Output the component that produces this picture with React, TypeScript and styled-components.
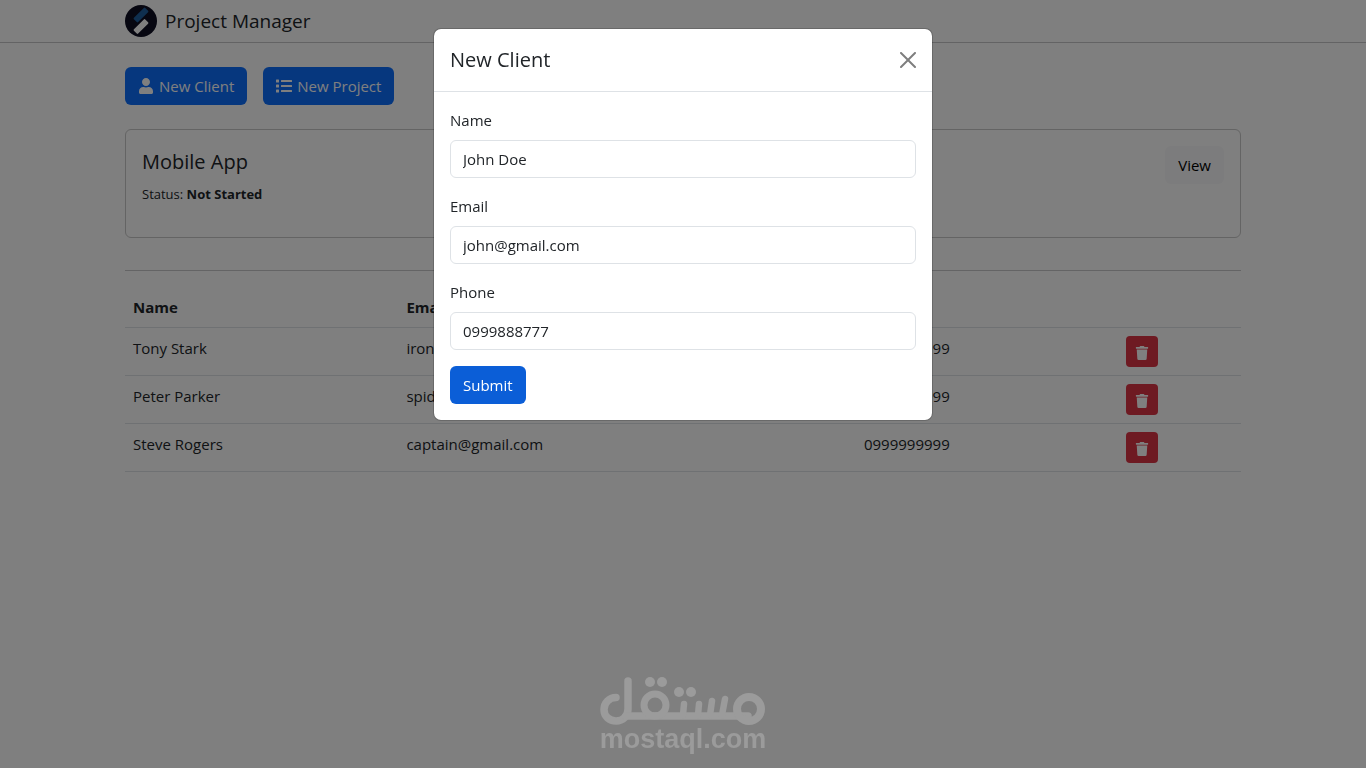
import React from "react";
import styled, { createGlobalStyle } from "styled-components";
import { FaUser, FaList, FaTrash } from "react-icons/fa";

const GlobalStyle = createGlobalStyle`
  *, *::before, *::after { box-sizing: border-box; }
  body {
    margin: 0;
    background: #fff;
    color: #212529;
    font-family: "Segoe UI", "Open Sans", "Noto Sans", sans-serif;
    font-size: 15px;
    line-height: 24px;
  }
  button, input { font: inherit; }
`;

const Container = styled.div`
  width: 100%;
  max-width: 1140px;
  margin: 0 auto;
  padding: 0 12px;
`;

const Navbar = styled.nav`
  padding: 5px 0;
  border-bottom: 1px solid #c6c7c8;
`;

const Brand = styled.a`
  display: flex;
  align-items: center;
  gap: 8px;
  width: fit-content;
  height: 32px;
  color: #212529;
  font-size: 19px;
  text-decoration: none;
`;

const Actions = styled.div`
  display: flex;
  gap: 16px;
  margin: 24px 0;
`;

const Button = styled.button<{ $tone: "primary" | "active" | "light" }>`
  display: inline-flex;
  align-items: center;
  gap: 5px;
  padding: 6px 12px;
  border: 1px solid transparent;
  border-radius: 6px;
  color: ${(p) => (p.$tone === "light" ? "#000" : "#fff")};
  background: ${(p) => ({ primary: "#0d6efd", active: "#0b5ed7", light: "#f8f9fa" })[p.$tone]};
`;

const Card = styled.article`
  display: flex;
  justify-content: space-between;
  align-items: flex-start;
  padding: 16px;
  min-height: 109px;
  border: 1px solid #c8c8c8;
  border-radius: 6px;
`;

const CardTitle = styled.h5`
  margin: 4px 0 8px;
  font-size: 20px;
  line-height: 24px;
  font-weight: 500;
`;

const Status = styled.p`
  margin: 0;
  font-size: 13px;
  line-height: 24px;
`;

const Divider = styled.hr`
  margin: 32px 0 16px;
  border: 0;
  border-top: 1px solid #c8c9ca;
`;

const Table = styled.table`
  width: 100%;
  table-layout: fixed;
  border-collapse: collapse;
  text-align: left;
`;

const Column = styled.col<{ $width: string }>`
  width: ${(p) => p.$width};
`;

const Cell = styled.td`
  padding: 8px;
  border-bottom: 1px solid #dee2e6;
  vertical-align: top;
`;

const DeleteButton = styled.button`
  display: block;
  padding: 10px 8px 7px;
  height: 31px;
  width: 32px;
  border: 0;
  border-radius: 4px;
  color: #fff;
  background: #dc3545;
  svg { display: block; margin: 0 auto; }
`;

const Backdrop = styled.div`
  position: fixed;
  inset: 0;
  background: rgba(0, 0, 0, 0.5);
`;

const ModalLayer = styled.div`
  position: fixed;
  inset: 0;
  padding: 28px 8px;
  overflow: auto;
`;

const Modal = styled.div`
  max-width: 500px;
  margin: 0 auto;
  border: 1px solid rgba(0, 0, 0, 0.175);
  border-radius: 8px;
  background: #fff;
  background-clip: padding-box;
`;

const ModalHeader = styled.header`
  display: flex;
  align-items: center;
  justify-content: space-between;
  padding: 16px;
  border-bottom: 1px solid #dee2e6;
`;

const ModalTitle = styled.h5`
  margin: 0;
  font-size: 20px;
  line-height: 30px;
  font-weight: 500;
`;

const CloseButton = styled.button`
  padding: 0;
  border: 0;
  background: none;
  opacity: 0.5;
  svg { display: block; }
`;

const Form = styled.form`
  padding: 16px;
`;

const Field = styled.div`
  margin-bottom: 16px;
`;

const Label = styled.label`
  display: block;
  margin-bottom: 8px;
`;

const Input = styled.input`
  display: block;
  width: 100%;
  padding: 6px 12px;
  height: 38px;
  border: 1px solid #dee2e6;
  border-radius: 6px;
  color: #212529;
  background: #fff;
`;

const Watermark = styled.div`
  position: fixed;
  left: 0;
  right: 0;
  bottom: 15px;
  display: flex;
  flex-direction: column;
  align-items: center;
  color: #9b9b9b;
  font-family: "Liberation Sans", sans-serif;
  font-size: 27px;
  font-weight: 700;
  line-height: 28px;
  pointer-events: none;
  svg { display: block; }
`;

const BrandLogo = () => (
  <svg width="32" height="32" viewBox="0 0 32 32" aria-hidden="true">
    <circle cx="16" cy="16" r="16" fill="#0f0f23" />
    <rect x="-8" y="-3" width="16" height="6" rx="1" fill="#1f5f9e" transform="translate(16 10) rotate(-45)" />
    <rect x="-8" y="-3" width="16" height="6" rx="1" fill="#fff" transform="translate(16 21.5) rotate(-45)" />
  </svg>
);

const WatermarkLogo = () => (
  <svg width="166" height="48" viewBox="0 0 166 48" fill="none" stroke="currentColor" strokeLinecap="round" aria-hidden="true">
    <path d="M16 20.500C9 20.500 4 26 4 32.500C4 39.500 9.500 44 16 44C23 44 28 39 28 32V4" strokeWidth="7.500" />
    <path d="M26 39H148" strokeWidth="7.500" />
    <circle cx="55" cy="28" r="11" strokeWidth="7" />
    <circle cx="149" cy="32" r="12" strokeWidth="8" />
    <path d="M84 27L83 38M99 27L98 38M112 24L110 38M125 22L122 38" strokeWidth="6.500" />
    <g fill="currentColor" stroke="none">
      <circle cx="50" cy="5" r="5" />
      <circle cx="62" cy="5" r="5" />
      <circle cx="79" cy="15" r="5" />
      <circle cx="91" cy="15" r="5" />
    </g>
  </svg>
);

const clients = [
  { name: "Tony Stark", email: "ironman@gmail.com", phone: "0999999999" },
  { name: "Peter Parker", email: "spider@gmail.com", phone: "0999999999" },
  { name: "Steve Rogers", email: "captain@gmail.com", phone: "0999999999" },
];

const fields = [
  { id: "name", label: "Name", type: "text", value: "John Doe" },
  { id: "email", label: "Email", type: "email", value: "john@gmail.com" },
  { id: "phone", label: "Phone", type: "tel", value: "0999888777" },
];

export default function App() {
  return (
    <>
      <GlobalStyle />
      <Navbar>
        <Container>
          <Brand href="#">
            <BrandLogo />
            Project Manager
          </Brand>
        </Container>
      </Navbar>
      <Container as="main">
        <Actions>
          <Button $tone="primary" type="button"><FaUser size={16} />New Client</Button>
          <Button $tone="primary" type="button"><FaList size={16} />New Project</Button>
        </Actions>
        <Card>
          <div>
            <CardTitle>Mobile App</CardTitle>
            <Status>Status: <strong>Not Started</strong></Status>
          </div>
          <Button $tone="light" type="button">View</Button>
        </Card>
        <Divider />
        <Table>
          <colgroup>
            <Column $width="24.5%" />
            <Column $width="41%" />
            <Column $width="23.5%" />
            <Column $width="11%" />
          </colgroup>
          <thead>
            <tr>
              <Cell as="th" scope="col">Name</Cell>
              <Cell as="th" scope="col">Email</Cell>
              <Cell as="th" scope="col">Phone</Cell>
              <Cell />
            </tr>
          </thead>
          <tbody>
            {clients.map((c) => (
              <tr key={c.name}>
                <Cell>{c.name}</Cell>
                <Cell>{c.email}</Cell>
                <Cell>{c.phone}</Cell>
                <Cell>
                  <DeleteButton type="button" aria-label={`Delete ${c.name}`}><FaTrash size={14} /></DeleteButton>
                </Cell>
              </tr>
            ))}
          </tbody>
        </Table>
      </Container>
      <Backdrop />
      <ModalLayer>
        <Modal role="dialog" aria-modal="true" aria-labelledby="client-modal-title">
          <ModalHeader>
            <ModalTitle id="client-modal-title">New Client</ModalTitle>
            <CloseButton type="button" aria-label="Close">
              <svg width="16" height="16" viewBox="0 0 16 16">
                <path d="M.293.293a1 1 0 0 1 1.414 0L8 6.586 14.293.293a1 1 0 1 1 1.414 1.414L9.414 8l6.293 6.293a1 1 0 0 1-1.414 1.414L8 9.414l-6.293 6.293a1 1 0 0 1-1.414-1.414L6.586 8 .293 1.707a1 1 0 0 1 0-1.414z" />
              </svg>
            </CloseButton>
          </ModalHeader>
          <Form onSubmit={(e) => e.preventDefault()}>
            {fields.map((f) => (
              <Field key={f.id}>
                <Label htmlFor={f.id}>{f.label}</Label>
                <Input id={f.id} type={f.type} defaultValue={f.value} />
              </Field>
            ))}
            <Button $tone="active" type="submit">Submit</Button>
          </Form>
        </Modal>
      </ModalLayer>
      <Watermark>
        <WatermarkLogo />
        mostaql.com
      </Watermark>
    </>
  );
}
